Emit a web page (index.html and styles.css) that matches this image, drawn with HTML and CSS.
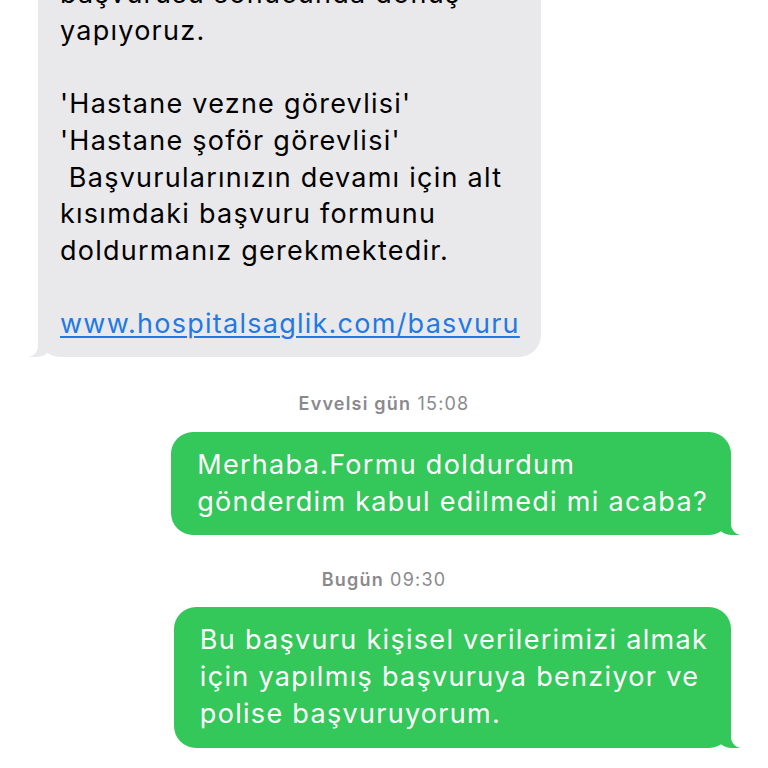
FILE: index.html
```html
<!DOCTYPE html>
<html lang="tr">
<head>
<meta charset="utf-8">
<title>Mesajlar</title>
<link rel="stylesheet" href="styles.css">
</head>
<body>
<div class="thread">
  <div class="row row-in">
    <div class="bubble in">başvurusu sonucunda dönüş<br>yapıyoruz.<br><br>'Hastane vezne görevlisi'<br>'Hastane şoför görevlisi'<br>&nbsp;Başvurularınızın devamı için alt<br>kısımdaki başvuru formunu<br>doldurmanız gerekmektedir.<br><br><a class="link" href="#">www.hospitalsaglik.com/basvuru</a></div>
  </div>
  <div class="stamp stamp-1"><span class="day">Evvelsi gün</span> 15:08</div>
  <div class="row row-out">
    <div class="bubble out">Merhaba.Formu doldurdum<br>gönderdim kabul edilmedi mi acaba?</div>
  </div>
  <div class="stamp stamp-2"><span class="day">Bugün</span> 09:30</div>
  <div class="row row-out">
    <div class="bubble out">Bu başvuru kişisel verilerimizi almak<br>için yapılmış başvuruya benziyor ve<br>polise başvuruyorum.</div>
  </div>
</div>
</body>
</html>
```
FILE: styles.css
```css
html, body {
  margin: 0;
  padding: 0;
  background: #ffffff;
}
body {
  width: 768px;
  height: 768px;
  overflow: hidden;
  font-family: "Inter", "Liberation Sans", Arial, sans-serif;
}
.thread {
  display: flex;
  flex-direction: column;
  margin-top: -38px;
}
.row {
  display: flex;
}
.row-in {
  justify-content: flex-start;
  padding-left: 38px;
}
.row-out {
  justify-content: flex-end;
  padding-right: 37px;
}
.bubble {
  position: relative;
  font-size: 27px;
  line-height: 36.7px;
  letter-spacing: 1.25px;
  white-space: nowrap;
  border-radius: 22px;
  padding: 14px 21px 14px 22px;
}
.in {
  background: #e9e9eb;
  color: #000000;
}
.out {
  background: #34c759;
  color: #ffffff;
  letter-spacing: 1.3px;
  padding: 15px 23px 15px 26px;
}
.in::before {
  content: "";
  position: absolute;
  bottom: 0;
  left: -10px;
  width: 24px;
  height: 22px;
  background: #e9e9eb;
  border-bottom-right-radius: 16px 14px;
}
.in::after {
  content: "";
  position: absolute;
  bottom: 0;
  left: -28px;
  width: 28px;
  height: 22px;
  background: #ffffff;
  border-bottom-right-radius: 11px;
}
.out::before {
  content: "";
  position: absolute;
  bottom: 0;
  right: -9px;
  width: 24px;
  height: 22px;
  background: #34c759;
  border-bottom-left-radius: 16px 14px;
}
.out::after {
  content: "";
  position: absolute;
  bottom: 0;
  right: -27px;
  width: 27px;
  height: 22px;
  background: #ffffff;
  border-bottom-left-radius: 11px;
}
.link {
  color: #1f7ae6;
  text-decoration: underline;
  text-decoration-thickness: 1.5px;
  text-underline-offset: 3px;
}
.stamp {
  text-align: center;
  font-size: 18px;
  line-height: 20px;
  letter-spacing: 1.2px;
  color: #8a8a8e;
}
.day {
  font-weight: 600;
}
.stamp-1 {
  margin: 37px 0 18px;
}
.stamp-2 {
  margin: 35px 0 17px;
}
```
